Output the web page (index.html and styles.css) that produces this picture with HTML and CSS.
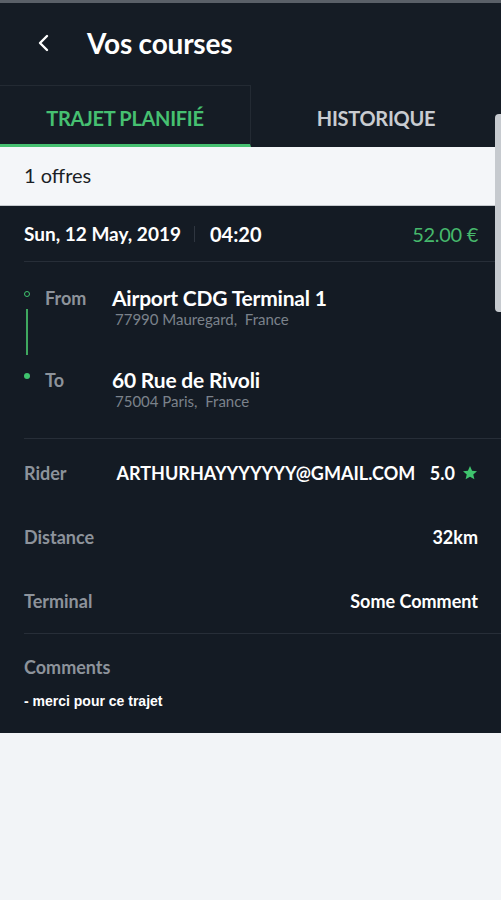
FILE: index.html
```html
<!DOCTYPE html>
<html lang="fr">
<head>
  <meta charset="UTF-8">
  <meta name="viewport" content="width=device-width, initial-scale=1.0">
  <title>Vos courses</title>
  <link rel="stylesheet" href="styles.css">
</head>
<body>
  <div class="app">
    <header class="top-bar">
      <span class="back">
        <svg width="14" height="18" viewBox="0 0 14 18"><path d="M10 2 L3 9 L10 16" fill="none" stroke="#fff" stroke-width="2.4" stroke-linecap="round" stroke-linejoin="round"/></svg>
      </span>
      <h1>Vos courses</h1>
    </header>

    <nav class="tabs">
      <div class="tab active">TRAJET PLANIFIÉ</div>
      <div class="tab">HISTORIQUE</div>
    </nav>

    <div class="offers">1 offres</div>

    <section class="ride">
      <div class="ride-head">
        <span class="date">Sun, 12 May, 2019</span>
        <span class="sep"></span>
        <span class="time">04:20</span>
        <span class="price">52.00 €</span>
      </div>

      <div class="route">
        <div class="stop">
          <div class="marker"><span class="dot hollow"></span><span class="line"></span></div>
          <div class="stop-label">From</div>
          <div class="stop-place">
            <div class="place-name">Airport CDG Terminal 1</div>
            <div class="place-sub">77990 Mauregard,&nbsp; France</div>
          </div>
        </div>
        <div class="stop">
          <div class="marker"><span class="dot"></span></div>
          <div class="stop-label">To</div>
          <div class="stop-place">
            <div class="place-name">60 Rue de Rivoli</div>
            <div class="place-sub">75004 Paris,&nbsp; France</div>
          </div>
        </div>
      </div>

      <div class="details">
        <div class="row">
          <span class="label">Rider</span>
          <span class="rider">ARTHURHAYYYYYYY@GMAIL.COM</span>
          <span class="value rating">5.0
            <svg width="16" height="16" viewBox="0 0 24 24"><path d="M12 1.5l3.1 7 7.4.7-5.6 4.9 1.7 7.4L12 17.6l-6.6 3.9 1.7-7.4-5.6-4.9 7.4-.7z" fill="#3fc46e"/></svg>
          </span>
        </div>
        <div class="row">
          <span class="label">Distance</span>
          <span class="value">32km</span>
        </div>
        <div class="row">
          <span class="label">Terminal</span>
          <span class="value">Some Comment</span>
        </div>
      </div>

      <div class="comments">
        <div class="label">Comments</div>
        <p class="comment-text">- merci pour ce trajet</p>
      </div>
    </section>

    <div class="scrollbar"></div>
  </div>
</body>
</html>
```

FILE: styles.css
```css
body {
  margin: 0;
  background: #f2f4f7;
  font-family: Lato, "Open Sans", sans-serif;
  color: #fff;
}

.app {
  position: relative;
  width: 501px;
}

.top-bar {
  background: #151c25;
  border-top: 3px solid #5a6068;
  height: 85px;
  display: flex;
  align-items: center;
  padding-left: 37px;
  box-sizing: border-box;
  padding-bottom: 2px;
}

.back {
  display: flex;
  width: 50px;
}

.top-bar h1 {
  margin: 0;
  font-size: 28px;
  font-weight: 700;
  letter-spacing: -0.2px;
}

.tabs {
  display: flex;
  background: #151c25;
  height: 62px;
}

.tab {
  flex: 1;
  display: flex;
  align-items: center;
  justify-content: center;
  font-size: 20px;
  font-weight: 700;
  color: #c9ccd1;
  border-bottom: 3px solid #151c25;
  padding-top: 6px;
  letter-spacing: -0.3px;
}

.tab.active {
  color: #46c071;
  border-bottom-color: #46c071;
  border-top: 1px solid #232a33;
  border-right: 1px solid #232a33;
}

.offers {
  background: #f4f6f9;
  color: #1b1f26;
  font-size: 20px;
  height: 58px;
  line-height: 57px;
  padding-left: 24px;
  border-bottom: 1px solid #c5c9ce;
}

.ride {
  background: #141b24;
  padding: 0 23px 0 24px;
  height: 527px;
  box-sizing: border-box;
}

.ride-head {
  display: flex;
  align-items: center;
  height: 55px;
  border-bottom: 1px solid #272e38;
  margin-right: -23px;
  padding-right: 23px;
  font-weight: 700;
  font-size: 19px;
}

.sep {
  width: 1px;
  height: 16px;
  background: #2f3640;
  margin: 0 15px 0 13px;
}

.time {
  font-size: 20px;
}

.price {
  margin-left: auto;
  color: #46b86c;
  font-weight: 400;
  font-size: 20px;
  letter-spacing: -0.3px;
}

.route {
  padding: 23px 0 13px;
  border-bottom: 1px solid #272e38;
  margin-right: -23px;
}

.stop {
  display: flex;
  height: 82px;
}

.stop:last-child {
  height: 58px;
}

.marker {
  width: 21px;
  display: flex;
  flex-direction: column;
  align-items: flex-start;
  padding-top: 6px;
}

.dot {
  width: 6px;
  height: 6px;
  border-radius: 50%;
  background: #3fc46e;
  box-sizing: border-box;
}

.dot.hollow {
  background: none;
  border: 1.5px solid #3fc46e;
}

.line {
  width: 2px;
  height: 46px;
  background: #3fa85f;
  margin: 12px 0 0 2px;
}

.stop-label {
  width: 67px;
  color: #8d939b;
  font-size: 18px;
  font-weight: 700;
  padding-top: 2px;
}

.place-name {
  font-size: 21px;
  font-weight: 700;
  letter-spacing: -0.2px;
  line-height: 25px;
}

.place-sub {
  color: #7b828b;
  font-size: 15px;
  line-height: 18px;
  margin-left: 3px;
}

.details {
  padding: 2px 23px 0 0;
  border-bottom: 1px solid #272e38;
  margin-right: -23px;
}

.row {
  display: flex;
  align-items: center;
  height: 64px;
}

.label {
  color: #8d939b;
  font-size: 18px;
  font-weight: 700;
}

.value {
  margin-left: auto;
  font-size: 18px;
  font-weight: 700;
}

.rider {
  padding-left: 50px;
  font-size: 18px;
  font-weight: 700;
}

.rating {
  display: flex;
  align-items: center;
  gap: 7px;
}

.comments {
  padding-top: 22px;
}

.comment-text {
  margin: 15px 0 0;
  font-family: "Liberation Sans", Arial, sans-serif;
  font-size: 14px;
  font-weight: 700;
}

.scrollbar {
  position: absolute;
  right: 0;
  top: 114px;
  width: 6px;
  height: 198px;
  background: #c6cacf;
  border-radius: 4px 0 0 4px;
}
```
